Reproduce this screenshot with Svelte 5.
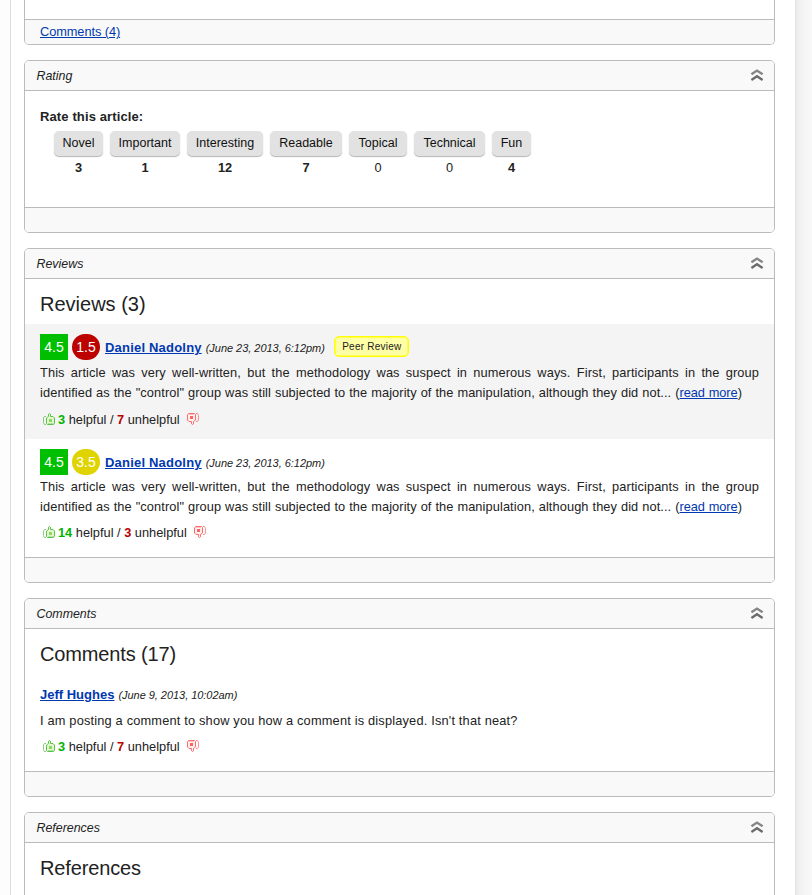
<script>
  const tags = [
    { name: 'Novel', n: 3, w: 49 },
    { name: 'Important', n: 1, w: 70 },
    { name: 'Interesting', n: 12, w: 76 },
    { name: 'Readable', n: 7, w: 72 },
    { name: 'Topical', n: 0, w: 58 },
    { name: 'Technical', n: 0, w: 71 },
    { name: 'Fun', n: 4, w: 39 }
  ];
  const reviews = [
    { second: '1.5', color: '#bd0000', peer: true, up: 3, down: 7 },
    { second: '3.5', color: '#dfd300', peer: false, up: 14, down: 3 }
  ];
</script>

{#snippet head(title)}
  <header>
    <span class="ttl">{title}</span>
    <svg width="14" height="14" viewBox="0 0 14 14" fill="none" stroke-width="2.4">
      <path d="M1.4 6.2 L7 2.6 L12.6 6.2" stroke="#858585" />
      <path d="M1.4 11.9 L7 8.3 L12.6 11.9" stroke="#6c6c6c" />
    </svg>
  </header>
{/snippet}

{#snippet thumb(down)}
  <svg class="thumb" class:down width="12" height="12" viewBox="0 0 12 12" fill="none" stroke={down ? '#ff6b6b' : '#5cc04c'}>
    <path d="M3 3.5 H1.5 L0.5 5 V9.5 L1.5 11.5 H3" opacity=".75" />
    <path d="M3.5 10.5 V5 L5.5 3.5 V1.2 L6.5 0.5 L7.5 1.2 V3.5 H10 L11.5 5 V10 L10.5 11.5 H4.5 Z" fill={down ? '#fff0f0' : '#e2f7ce'} />
    <rect x="6" y="6" width="3" height="3" stroke="none" fill={down ? '#ff6464' : '#8ad960'} />
    <path d="M5 10.5 H10.5" stroke={down ? '#ffc4c4' : '#b0e59c'} />
  </svg>
{/snippet}

{#snippet votes(up, down)}
  <div class="votes">
    {@render thumb(false)}<span><b class="g">{up}</b> helpful / <b class="r">{down}</b> unhelpful</span>{@render thumb(true)}
  </div>
{/snippet}

<div class="page">
  <main>
    <section class="first">
      <div class="fill"></div>
      <footer><a href="#comments">Comments (4)</a></footer>
    </section>

    <section>
      {@render head('Rating')}
      <div class="rating">
        <strong>Rate this article:</strong>
        <div class="tags">
          {#each tags as t}
            <div class="tag" style="width:{t.w}px">
              <button>{t.name}</button>
              <span class:bold={t.n > 0}>{t.n}</span>
            </div>
          {/each}
        </div>
      </div>
      <footer></footer>
    </section>

    <section>
      {@render head('Reviews')}
      <div class="reviews">
        <h2>Reviews (3)</h2>
        {#each reviews as r}
          <article class:shade={r.peer}>
            <div class="by">
              <span class="score">4.5</span>
              <span class="score round" style="background:{r.color}">{r.second}</span>
              <a class="name wide" href="#user">Daniel Nadolny</a>
              <i class="date">(June 23, 2013, 6:12pm)</i>
              {#if r.peer}<span class="peer">Peer Review</span>{/if}
            </div>
            <p>
              <span class="line">This article was very well-written, but the methodology was suspect in numerous ways. First, participants in the group</span>
              <span class="line l2">identified as the "control" group was still subjected to the majority of the manipulation, although they did not... (<a href="#more">read more</a>)</span>
            </p>
            {@render votes(r.up, r.down)}
          </article>
        {/each}
      </div>
      <footer></footer>
    </section>

    <section>
      {@render head('Comments')}
      <div class="comments">
        <h2 class="tight">Comments (17)</h2>
        <div class="cby"><a class="name" href="#user">Jeff Hughes</a><i class="date">(June 9, 2013, 10:02am)</i></div>
        <p class="one">I am posting a comment to show you how a comment is displayed. Isn't that neat?</p>
        {@render votes(3, 7)}
      </div>
      <footer></footer>
    </section>

    <section class="last">
      {@render head('References')}
      <h2 class="tight">References</h2>
    </section>
  </main>
</div>

<style>
  :global(body) { background: #fff; overflow: hidden; }
  .page {
    height: 895px; overflow: hidden; display: flex; box-sizing: border-box; padding-left: 10px;
    background: linear-gradient(90deg, #fdfdfd 0 10px, #fff 10px 795px, #e4e4e4 795px, #efefef 798px, #f5f5f5 804px, #f8f8f8 812px);
    font: 12.8px/20px "Liberation Sans", Arial, sans-serif; color: #222;
  }
  main { width: 751px; border-left: 1px solid #ddd; padding: 0 20px 0 13px; display: flex; flex-direction: column; gap: 15px; }
  section { border: 1px solid #bbb; border-radius: 5px; overflow: hidden; flex: none; background: #fff; }
  .first { border-top: 0; border-radius: 0 0 5px 5px; }
  .first a { letter-spacing: -.08px; }
  .fill { height: 19px; }
  .last { height: 100px; }
  header { height: 29px; border-bottom: 1px solid #bbb; background: #f9f9f9; display: flex; align-items: center; justify-content: space-between; padding: 0 10px 0 11.5px; }
  header svg { margin-top: -1px; }
  .ttl { font-style: italic; font-size: 12.4px; }
  footer { height: 24px; border-top: 1px solid #bbb; background: #f9f9f9; padding-left: 15px; line-height: 24px; }
  a { color: #0039b0; }
  h2 { margin: 0; font-weight: 400; font-size: 20px; line-height: 24px; padding: 13px 15px 0; }
  .tight { letter-spacing: -.14px; }
  .rating { height: 116px; box-sizing: border-box; padding: 16px 15px 0; }
  strong { display: block; font-size: 13px; letter-spacing: .12px; }
  .tags { display: flex; gap: 7px; padding: 4px 0 0 14px; }
  .tag { display: flex; flex-direction: column; align-items: center; gap: 2px; }
  button { width: 100%; height: 25px; padding: 0 0 1px; border: 0; border-radius: 5px; background: #e2e2e2; box-shadow: 0 1px 1px #b4b4b4; font: 12.5px "Liberation Sans", Arial, sans-serif; color: #111; white-space: nowrap; }
  .bold { font-weight: 700; }
  .reviews { height: 278px; }
  .reviews h2 { height: 32px; }
  article { padding: 10px 15px 0; height: 105px; }
  article + article { height: 104px; }
  .shade { background: #f4f4f4; }
  .by { display: flex; align-items: center; height: 26px; }
  .score { width: 28px; height: 26px; background: #00bf00; color: #fff; font-size: 14px; line-height: 27px; text-align: center; margin-right: 4px; }
  .round { border-radius: 13px; margin-right: 5px; }
  .name { font-weight: 700; font-size: 13px; padding-top: 2px; }
  .wide { letter-spacing: .2px; }
  .date { font-size: 11px; margin-left: 4px; padding-top: 2px; letter-spacing: -.03px; }
  .peer { margin-left: 9.5px; width: 73px; height: 19px; border: 1px solid #ff0; box-shadow: inset 0 0 0 .5px #ff0; border-radius: 5px; background: #ffffa5; font-size: 10px; line-height: 20px; text-align: center; letter-spacing: .25px; margin-top: -2px; }
  p { margin: 3px 0 0; }
  article + article p { margin-top: 2px; }
  .line { display: block; white-space: nowrap; letter-spacing: .1px; text-align: justify; text-align-last: justify; }
  .l2 { width: 702px; }
  .l2 a { letter-spacing: -.05px; }
  .votes { display: flex; align-items: center; height: 20px; margin: 7px 0 0 3px; }
  article + article .votes { margin-top: 6px; }
  .votes span { margin: 0 7px 0 3px; }
  .thumb { margin-top: -3px; }
  .down { transform: rotate(180deg); }
  .g { color: #00b400; }
  .r { color: #b90000; }
  .comments { height: 142px; }
  .cby { padding: 18px 15px 0; display: flex; height: 20px; align-items: center; }
  .cby .date { letter-spacing: -.04px; }
  .one { padding: 0 15px; margin-top: 7px; letter-spacing: .18px; }
  .comments .votes { margin: 6px 0 0 18px; }
</style>
